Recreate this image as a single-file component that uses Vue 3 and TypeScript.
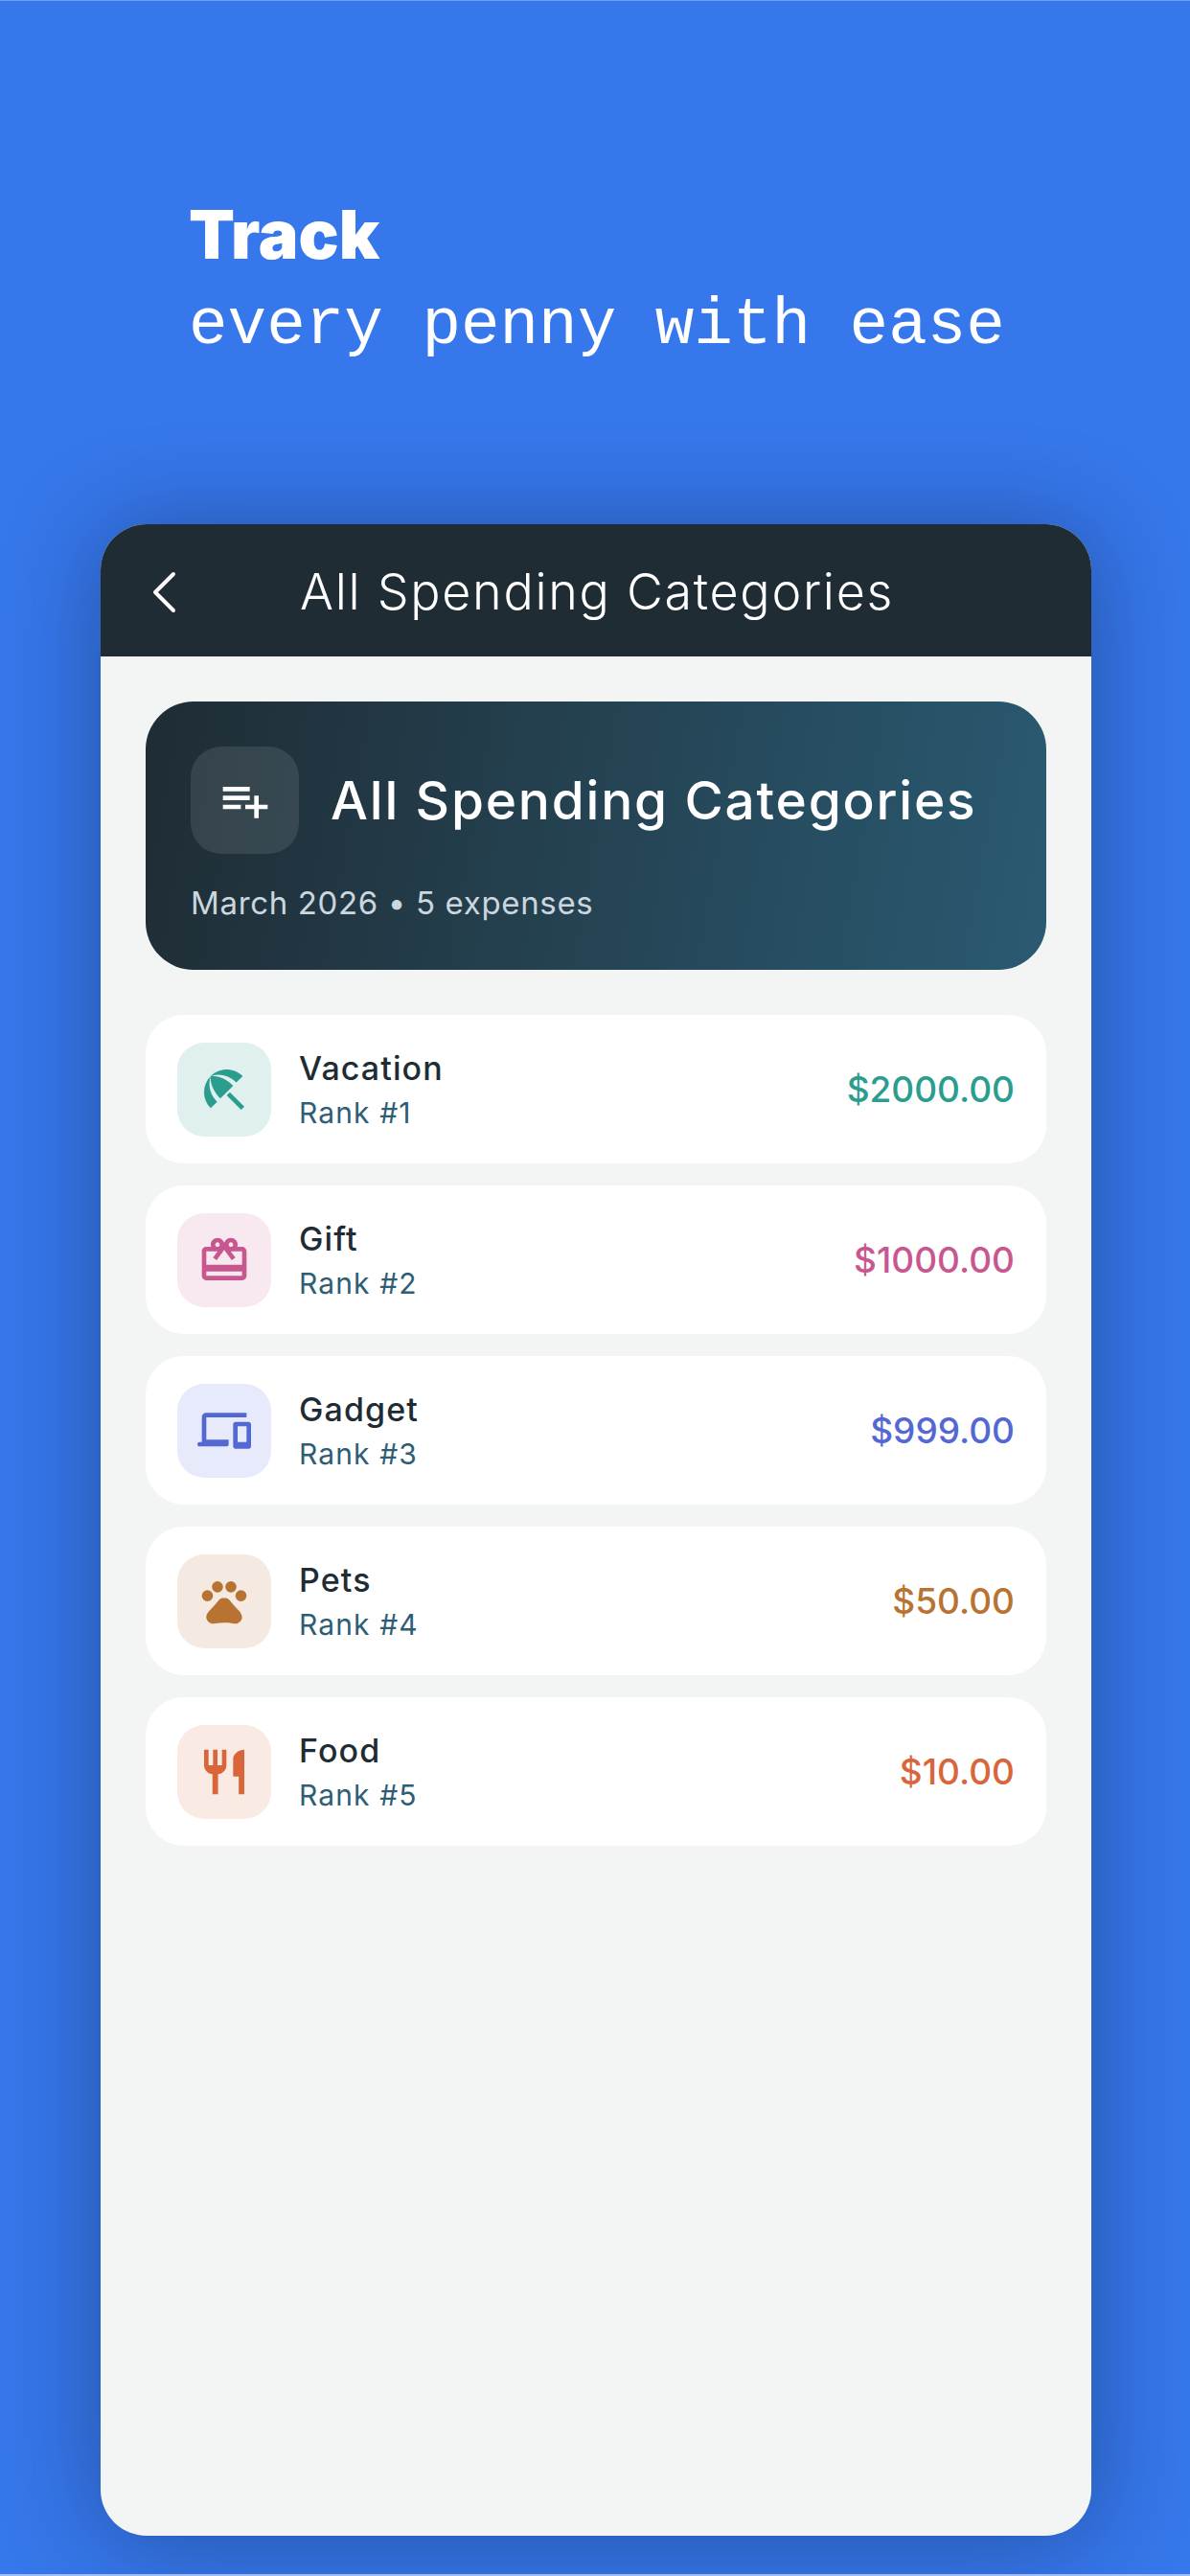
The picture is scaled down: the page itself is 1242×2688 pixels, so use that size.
<script setup lang="ts">
type Category = {
  name: string
  rank: number
  amount: string
  color: string
  tint: string
  icon: string
}

const categories: Category[] = [
  {
    name: 'Vacation',
    rank: 1,
    amount: '$2000.00',
    color: '#2a9d8f',
    tint: '#dff0ee',
    icon: 'M13.127 14.56l1.43-1.43 6.44 6.443L19.57 21zm4.293-5.73l2.86-2.86c-3.95-3.95-10.35-3.96-14.3-.02 3.93-1.3 8.31-.25 11.44 2.88zM5.95 5.98c-3.94 3.95-3.93 10.35.02 14.3l2.86-2.86C5.7 14.29 4.65 9.91 5.95 5.98zm.02-.02l-.01.01c-.38 3.01 1.17 6.88 4.3 10.02l5.73-5.73c-3.13-3.13-7.01-4.68-10.02-4.3z'
  },
  {
    name: 'Gift',
    rank: 2,
    amount: '$1000.00',
    color: '#c9578f',
    tint: '#f8e8f0',
    icon: 'M20 6h-2.18c.11-.31.18-.65.18-1 0-1.66-1.34-3-3-3-1.05 0-1.96.54-2.5 1.35l-.5.67-.5-.68C10.96 2.54 10.05 2 9 2 7.34 2 6 3.34 6 5c0 .35.07.69.18 1H4c-1.11 0-1.99.89-1.99 2L2 19c0 1.11.89 2 2 2h16c1.11 0 2-.89 2-2V8c0-1.11-.89-2-2-2zm-5-2c.55 0 1 .45 1 1s-.45 1-1 1-1-.45-1-1 .45-1 1-1zM9 4c.55 0 1 .45 1 1s-.45 1-1 1-1-.45-1-1 .45-1 1-1zm11 15H4v-2h16v2zm0-5H4V8h5.08L7 10.83 8.62 12 11 8.76l1-1.36 1 1.36L15.38 12 17 10.83 14.92 8H20v6z'
  },
  {
    name: 'Gadget',
    rank: 3,
    amount: '$999.00',
    color: '#5468d4',
    tint: '#e7eafa',
    icon: 'M4 6h18V4H4c-1.1 0-2 .9-2 2v11H1c-.55 0-1 .45-1 1s.45 1 1 1h12c.55 0 1-.45 1-1v-2H4V6zm19 2h-6c-.55 0-1 .45-1 1v10c0 .55.45 1 1 1h6c.55 0 1-.45 1-1V9c0-.55-.45-1-1-1zm-1 9h-4v-7h4v7z'
  },
  {
    name: 'Pets',
    rank: 4,
    amount: '$50.00',
    color: '#b87333',
    tint: '#f5eae1',
    icon: 'M4.5 7a2.5 2.5 0 1 0 0 5 2.5 2.5 0 0 0 0-5zM9 3a2.5 2.5 0 1 0 0 5 2.5 2.5 0 0 0 0-5zm6 0a2.5 2.5 0 1 0 0 5 2.5 2.5 0 0 0 0-5zm4.5 4a2.5 2.5 0 1 0 0 5 2.5 2.5 0 0 0 0-5zm-2.16 7.86c-.87-1.02-1.6-1.89-2.48-2.91-.46-.54-1.05-1.08-1.75-1.32-.11-.04-.22-.07-.33-.09-.25-.04-.52-.04-.78-.04s-.53 0-.79.05c-.11.02-.22.05-.33.09-.7.24-1.28.78-1.75 1.32-.87 1.02-1.6 1.89-2.48 2.91-1.31 1.31-2.92 2.76-2.62 4.79.29 1.02 1.02 2.03 2.33 2.32.73.15 3.06-.44 5.54-.44h.18c2.48 0 4.81.58 5.54.44 1.31-.29 2.04-1.31 2.33-2.32.31-2.04-1.3-3.49-2.61-4.8z'
  },
  {
    name: 'Food',
    rank: 5,
    amount: '$10.00',
    color: '#d9653b',
    tint: '#f9eae4',
    icon: 'M11 9H9V2H7v7H5V2H3v7c0 2.12 1.66 3.84 3.75 3.97V22h2.5v-9.03C11.34 12.84 13 11.12 13 9V2h-2v7zm5-3v8h2.5v8H21V2c-2.76 0-5 2.24-5 4z'
  }
]
</script>

<template>
  <div class="stage">
    <div class="headline">
      <div class="headline-bold">Track</div>
      <div class="headline-mono">every penny with ease</div>
    </div>

    <div class="phone">
      <header class="topbar">
        <svg class="back" viewBox="0 0 26 44" fill="none" stroke="#fff" stroke-width="4" stroke-linecap="round" stroke-linejoin="round">
          <path d="M23 3L4 22l19 19" />
        </svg>
        <span class="topbar-title">All Spending Categories</span>
      </header>

      <main class="content">
        <section class="hero">
          <div class="hero-head">
            <div class="hero-icon">
              <svg viewBox="0 0 24 24" fill="#fff">
                <path d="M14 10H2v2h12v-2zm0-4H2v2h12V6zm4 8v-4h-2v4h-4v2h4v4h2v-4h4v-2h-4zM2 16h8v-2H2v2z" />
              </svg>
            </div>
            <h1 class="hero-title">All Spending Categories</h1>
          </div>
          <div class="hero-sub">March 2026 • 5 expenses</div>
        </section>

        <ul class="list">
          <li v-for="cat in categories" :key="cat.name" class="row">
            <div class="row-icon" :style="{ background: cat.tint }">
              <svg viewBox="0 0 24 24" :fill="cat.color"><path :d="cat.icon" /></svg>
            </div>
            <div class="row-text">
              <div class="row-name">{{ cat.name }}</div>
              <div class="row-rank">Rank #{{ cat.rank }}</div>
            </div>
            <div class="row-amount" :style="{ color: cat.color }">{{ cat.amount }}</div>
          </li>
        </ul>
      </main>
    </div>
  </div>
</template>

<style>
html,
body {
  margin: 0;
  background: #3677eb;
}
</style>

<style scoped>
.stage {
  box-sizing: border-box;
  width: 1242px;
  height: 2688px;
  overflow: hidden;
  display: flex;
  flex-direction: column;
  border-top: 1px solid #6d9ef3;
  border-bottom: 2px solid #9fbdf6;
  background: #3677eb;
  font-family: Inter, 'Noto Sans', sans-serif;
}

.headline {
  height: 546px;
  flex: none;
  box-sizing: border-box;
  padding: 204px 0 0 197px;
  color: #fff;
}

.headline-bold {
  font-family: Inter, sans-serif;
  font-weight: 900;
  font-size: 70px;
  line-height: 80px;
}

.headline-mono {
  margin-top: 15px;
  font-family: 'Liberation Mono', monospace;
  font-size: 67.6px;
  line-height: 80px;
}

.phone {
  width: 1034px;
  height: 2099px;
  flex: none;
  margin-left: 105px;
  display: flex;
  flex-direction: column;
  border-radius: 48px;
  background: #f3f5f4;
  box-shadow: 0 4px 100px rgb(15 30 60 / 42%);
  overflow: hidden;
}

.topbar {
  box-sizing: border-box;
  height: 138px;
  flex: none;
  display: flex;
  align-items: center;
  padding: 3px 0 0 53px;
  background: #1f2c34;
  color: #fff;
}

.back {
  width: 26px;
  height: 44px;
}

.topbar-title {
  margin-left: 129px;
  font-size: 52px;
  font-weight: 300;
  letter-spacing: 1.7px;
  white-space: nowrap;
}

.content {
  padding: 47px;
  display: flex;
  flex-direction: column;
  gap: 47px;
}

.hero {
  box-sizing: border-box;
  height: 280px;
  padding: 47px;
  border-radius: 50px;
  background: linear-gradient(100deg, #1f2c34 0%, #2a5a72 100%);
  color: #fff;
}

.hero-head {
  display: flex;
  align-items: center;
  gap: 33px;
}

.hero-icon {
  width: 113px;
  height: 112px;
  display: flex;
  align-items: center;
  justify-content: center;
  border-radius: 32px;
  background: rgb(255 255 255 / 10%);
}

.hero-icon svg {
  width: 56px;
  height: 56px;
}

.hero-title {
  margin: 0;
  font-size: 55px;
  font-weight: 500;
  letter-spacing: 1.8px;
  white-space: nowrap;
}

.hero-sub {
  margin-top: 29px;
  font-size: 33px;
  line-height: 44px;
  letter-spacing: 0.65px;
  color: #cbd6de;
}

.list {
  margin: 0;
  padding: 0;
  list-style: none;
  display: flex;
  flex-direction: column;
  gap: 23px;
}

.row {
  box-sizing: border-box;
  height: 155px;
  padding: 0 33px;
  display: flex;
  align-items: center;
  border-radius: 40px;
  background: #fff;
}

.row-icon {
  width: 98px;
  height: 98px;
  flex: none;
  display: flex;
  align-items: center;
  justify-content: center;
  border-radius: 28px;
}

.row-icon svg {
  width: 56px;
  height: 56px;
}

.row-text {
  margin-left: 29px;
  flex: 1;
}

.row-name {
  font-size: 34px;
  font-weight: 500;
  line-height: 44px;
  letter-spacing: 1.1px;
  color: #1f2c34;
}

.row-rank {
  margin-top: 4px;
  font-size: 30px;
  line-height: 40px;
  letter-spacing: 1.1px;
  color: #2e5d75;
}

.row-amount {
  font-size: 37px;
  font-weight: 500;
}
</style>
